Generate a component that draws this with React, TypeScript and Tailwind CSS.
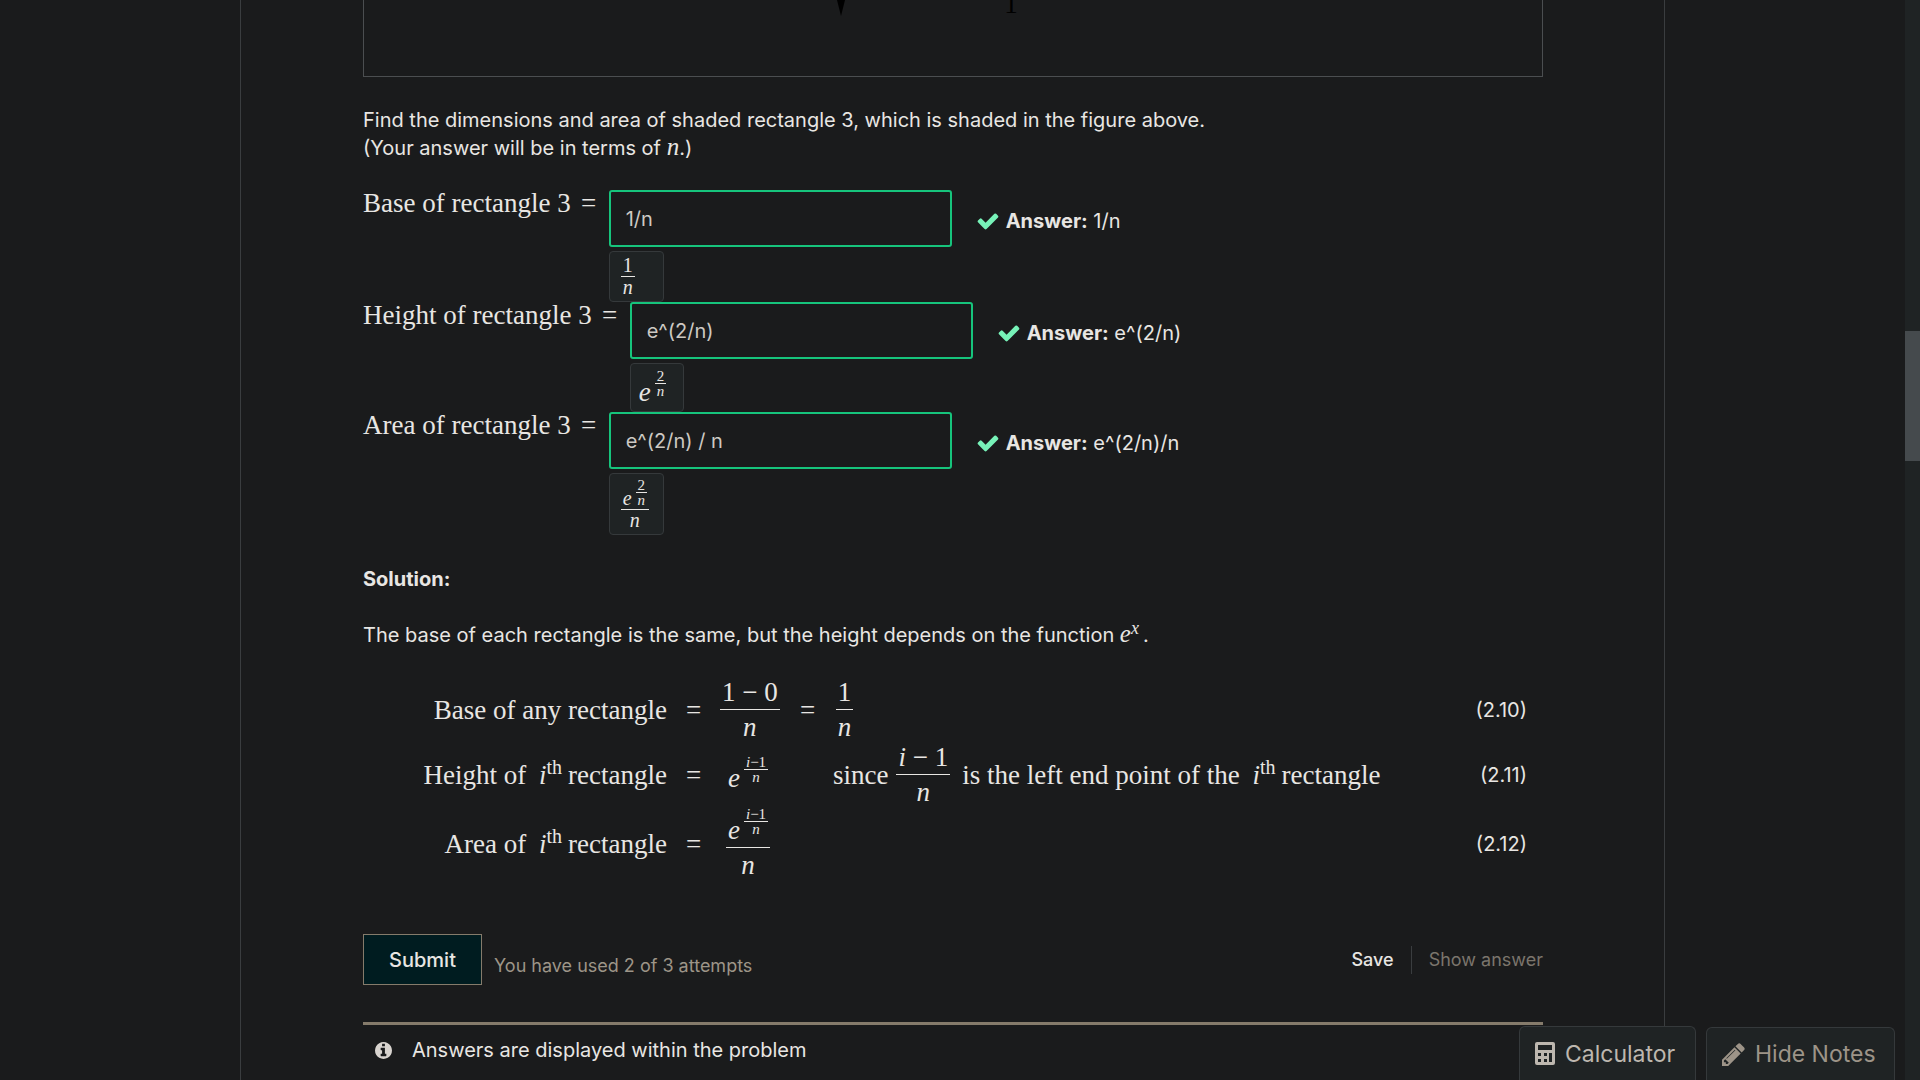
import type { ReactNode } from "react";

const serif = "font-['Liberation_Serif',serif]";

function Frac({ top, bottom, size = "lg", className = "" }: { top: ReactNode; bottom: ReactNode; size?: "lg" | "sm" | "xs"; className?: string }) {
  const sizes = {
    lg: "text-[27px] leading-[34px]",
    sm: "text-[20px] leading-[21px]",
    xs: "text-[15px] leading-[14px]",
  };
  return (
    <span className={`inline-flex flex-col items-stretch text-center ${sizes[size]} ${className}`}>
      <span className="px-0.5">{top}</span>
      <span className="h-px bg-[#e8e6e3]" />
      <span className="px-0.5">{bottom}</span>
    </span>
  );
}

function Var({ children }: { children: ReactNode }) {
  return <i>{children}</i>;
}

function CheckIcon() {
  return (
    <svg viewBox="0 0 1792 1792" className="h-6 w-6 fill-[#77f2b8]" aria-hidden="true">
      <path d="M1671 566q0 40-28 68l-724 724-136 136q-28 28-68 28t-68-28l-136-136-362-362q-28-28-28-68t28-68l136-136q28-28 68-28t68 28l294 295 656-657q28-28 68-28t68 28l136 136q28 28 28 68z" />
    </svg>
  );
}

function InfoIcon() {
  return (
    <svg viewBox="128 128 1536 1536" className="h-[17px] w-[17px] fill-[#d8d4cf]" aria-hidden="true">
      <path d="M1152 1376v-160q0-14-9-23t-23-9h-96v-512q0-14-9-23t-23-9h-320q-14 0-23 9t-9 23v160q0 14 9 23t23 9h96v320h-96q-14 0-23 9t-9 23v160q0 14 9 23t23 9h448q14 0 23-9t9-23zm-128-896v-160q0-14-9-23t-23-9h-192q-14 0-23 9t-9 23v160q0 14 9 23t23 9h192q14 0 23-9t9-23zm640 416q0 209-103 385.5t-279.5 279.5-385.5 103-385.5-103-279.5-279.5-103-385.5 103-385.5 279.5-279.5 385.5-103 385.5 103 279.5 279.5 103 385.5z" />
    </svg>
  );
}

function CalculatorIcon() {
  return (
    <svg viewBox="0 0 20 23" className="h-[23px] w-5 fill-[#bdb7af]" aria-hidden="true">
      <path
        fillRule="evenodd"
        d="M2 0h16a2 2 0 0 1 2 2v19a2 2 0 0 1-2 2H2a2 2 0 0 1-2-2V2a2 2 0 0 1 2-2zM3 3v5h14V3zM3 11v3h3v-3zM9 11v3h3v-3zM14 11v9h3v-9zM3 17v3h3v-3zM9 17v3h3v-3z"
      />
    </svg>
  );
}

function PencilIcon() {
  return (
    <svg viewBox="128 128 1536 1536" className="h-[23px] w-[23px] fill-[#9d9488]" aria-hidden="true">
      <path d="M491 1536l91-91-235-235-91 91v107h128v128h107zm523-928q0-22-22-22-10 0-17 7l-542 542q-7 7-7 17 0 22 22 22 10 0 17-7l542-542q7-7 7-17zm-54-192l416 416-832 832h-416v-416zm683 96q0 53-37 90l-166 166-416-416 166-165q36-38 90-38 53 0 91 38l235 234q37 39 37 91z" />
    </svg>
  );
}

function AnswerRow({ id, label, value, answer, preview, previewClass, rowClass }: { id: string; label: string; value: string; answer: string; preview: ReactNode; previewClass: string; rowClass: string }) {
  return (
    <div className={`flex items-start ${rowClass}`}>
      <label htmlFor={id} className={`${serif} flex gap-2 text-[27px] leading-[26px] whitespace-nowrap`}>
        <span>{label}</span>
        <span className="mr-2.5 w-5 text-center">=</span>
      </label>
      <div className="flex flex-col items-start gap-1">
        <input
          id={id}
          type="text"
          defaultValue={value}
          className="h-[57px] w-[343px] rounded-[3px] border-2 border-[#16c47c] bg-transparent px-[15px] text-[20px] text-[#cdc9c3] outline-none"
        />
        <div className={`${serif} flex rounded border border-[#35393b] bg-[#1f2324] ${previewClass}`}>{preview}</div>
      </div>
      <p className="ml-6 flex h-[61px] items-center gap-1.5 whitespace-nowrap">
        <CheckIcon />
        <span>
          <strong className="font-bold">Answer:</strong> {answer}
        </span>
      </p>
    </div>
  );
}

function Ith() {
  return (
    <span className="mx-1.5">
      <Var>i</Var>
      <sup className="-top-2.5 text-[20px] leading-none">th</sup>
    </span>
  );
}

function PowFrac({ top }: { top: ReactNode }) {
  return (
    <span className="inline-flex items-end gap-1">
      <span className="text-[27px] leading-7">
        <Var>e</Var>
      </span>
      <Frac size="xs" top={top} bottom={<Var>n</Var>} className="mb-2" />
    </span>
  );
}

export default function App() {
  const iMinus1 = (
    <>
      <Var>i</Var>−1
    </>
  );
  return (
    <div className="relative flex h-screen overflow-hidden bg-[#1a1b1c] font-['Inter',sans-serif] text-[20px] leading-7 text-[#e8e6e3]">
      <main className="min-w-0 flex-1">
        <div className="mx-auto h-full w-full max-w-[1425px] border-x border-[#3a3d3f] pr-[121px] pl-[122px]">
          <figure className="h-[77px] border-x border-b border-[#4b4e50]">
            <svg viewBox="0 0 300 76" className="mx-auto h-[76px] w-[300px]" aria-hidden="true">
              <path d="M34 0h8l-4 16z" />
              <text x="208" y="13" textAnchor="middle" fontSize="27" className={serif}>
                1
              </text>
            </svg>
          </figure>

          <p className="mt-[29px]">
            Find the dimensions and area of shaded rectangle 3, which is shaded in the figure above.
            <br />
            (Your answer will be in terms of <span className={`${serif} text-[25px] leading-none italic`}>n</span>.)
          </p>

          <div className="mt-7">
            <AnswerRow
              id="base"
              label="Base of rectangle 3"
              value="1/n"
              answer="1/n"
              rowClass="h-28"
              previewClass="h-[51px] w-[55px] items-center pl-[11px]"
              preview={<Frac size="sm" top="1" bottom={<Var>n</Var>} />}
            />
            <AnswerRow
              id="height"
              label="Height of rectangle 3"
              value="e^(2/n)"
              answer="e^(2/n)"
              rowClass="h-[110px]"
              previewClass="h-[49px] w-[54px] items-center pl-2"
              preview={<PowFrac top="2" />}
            />
            <AnswerRow
              id="area"
              label="Area of rectangle 3"
              value="e^(2/n) / n"
              answer="e^(2/n)/n"
              rowClass="h-[124px]"
              previewClass="h-[62px] w-[55px] items-center pl-[11px]"
              preview={
                <Frac
                  size="sm"
                  top={
                    <span className="flex items-end gap-1">
                      <Var>e</Var>
                      <Frac size="xs" top="2" bottom={<Var>n</Var>} className="mb-0.5" />
                    </span>
                  }
                  bottom={<Var>n</Var>}
                />
              }
            />
          </div>

          <h3 className="mt-[29px] font-bold">Solution:</h3>
          <p className="mt-7">
            The base of each rectangle is the same, but the height depends on the function{" "}
            <span className={`${serif} mr-1 text-[25px] leading-none italic`}>
              e<sup className="-top-2 text-[18px] leading-none">x</sup>
            </span>
            .
          </p>

          <div className={`${serif} mt-[26px] grid grid-cols-[304px_53px_minmax(0,1fr)_auto] items-center pr-4 text-[27px] leading-8 whitespace-nowrap`}>
            <span className="text-right">Base of any rectangle</span>
            <span className="text-center">=</span>
            <span className="flex h-[69px] items-center">
              <Frac top="1 − 0" bottom={<Var>n</Var>} />
              <span className="w-14 text-center">=</span>
              <Frac top="1" bottom={<Var>n</Var>} />
            </span>
            <span className="text-right font-['Inter',sans-serif] text-[20px]">(2.10)</span>

            <span className="text-right">
              Height of <Ith />
              rectangle
            </span>
            <span className="text-center">=</span>
            <span className="flex h-[61px] items-center">
              <span className="w-[113px] pl-2">
                <PowFrac top={iMinus1} />
              </span>
              <span>since</span>
              <Frac
                className="mr-3 ml-2"
                top={
                  <>
                    <Var>i</Var> − 1
                  </>
                }
                bottom={<Var>n</Var>}
              />
              <span>
                is the left end point of the <Ith />
                rectangle
              </span>
            </span>
            <span className="text-right font-['Inter',sans-serif] text-[20px]">(2.11)</span>

            <span className="text-right">
              Area of <Ith />
              rectangle
            </span>
            <span className="text-center">=</span>
            <span className="flex h-[78px] items-center pl-1.5">
              <Frac top={<PowFrac top={iMinus1} />} bottom={<Var>n</Var>} />
            </span>
            <span className="text-right font-['Inter',sans-serif] text-[20px]">(2.12)</span>
          </div>

          <div className="mt-[51px] flex items-center">
            <button type="button" className="h-[51px] w-[119px] border border-[#857b6b] bg-[#001c20] font-medium">
              Submit
            </button>
            <p className="mt-3 ml-3 text-[18px] text-[#9d9588]">You have used 2 of 3 attempts</p>
            <div className="ml-auto flex items-center text-[18px]">
              <button type="button" className="border-r border-[#3a3d3f] pr-[17px] font-medium">
                Save
              </button>
              <button type="button" disabled className="pl-[17px] text-[#7b756c]">
                Show answer
              </button>
            </div>
          </div>

          <div className="mt-[37px] flex items-center gap-5 border-t-[3px] border-[#857b6b] px-3 pt-[11px]">
            <InfoIcon />
            <p>Answers are displayed within the problem</p>
          </div>
        </div>
      </main>

      <div className="w-[15px] bg-[#1f2324] pt-[331px]" aria-hidden="true">
        <div className="h-[130px] bg-[#454a4d]" />
      </div>

      <div className="absolute right-[25px] bottom-0 flex items-end gap-2.5 text-[23px]">
        <button type="button" className="flex h-[54px] w-[177px] items-center gap-2.5 rounded-t-md border border-b-0 border-[#35393b] bg-[#1f2324] pl-[15px] text-[#bdb7af]">
          <CalculatorIcon />
          Calculator
        </button>
        <button type="button" className="flex h-[53px] w-[189px] items-center gap-2.5 rounded-t-md border border-b-0 border-[#35393b] bg-[#1f2324] pl-[15px] text-[#9d9488]">
          <PencilIcon />
          Hide Notes
        </button>
      </div>
    </div>
  );
}
